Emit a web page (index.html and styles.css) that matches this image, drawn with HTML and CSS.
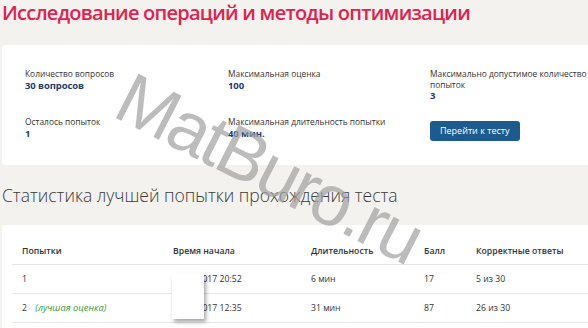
FILE: index.html
```html
<!DOCTYPE html>
<html lang="ru">
<head>
  <meta charset="UTF-8" />
  <title>Исследование операций и методы оптимизации</title>
  <link rel="stylesheet" href="styles.css">
</head>
<body>
  <div id="page">
    <h1 class="title">Исследование операций и методы оптимизации</h1>

    <div class="card info">
      <div class="item">
        <p class="label">Количество вопросов</p>
        <p class="value">30 вопросов</p>
      </div>
      <div class="item">
        <p class="label">Максимальная оценка</p>
        <p class="value">100</p>
      </div>
      <div class="item">
        <p class="label">Максимально допустимое количество попыток</p>
        <p class="value">3</p>
      </div>
      <div class="item">
        <p class="label">Осталось попыток</p>
        <p class="value">1</p>
      </div>
      <div class="item">
        <p class="label">Максимальная длительность попытки</p>
        <p class="value">40 мин.</p>
      </div>
      <div class="item">
        <button class="go">Перейти к тесту</button>
      </div>
    </div>

    <h2 class="subtitle">Статистика лучшей попытки прохождения теста</h2>

    <div class="card stats">
      <table>
        <tr>
          <th class="c1">Попытки</th>
          <th class="c2">Время начала</th>
          <th class="c3">Длительность</th>
          <th class="c4">Балл</th>
          <th>Корректные ответы</th>
        </tr>
        <tr>
          <td>1</td>
          <td>05.03.2017 20:52</td>
          <td>6 мин</td>
          <td>17</td>
          <td>5 из 30</td>
        </tr>
        <tr>
          <td>2 <span class="best">(лучшая оценка)</span></td>
          <td>12.03.2017 12:35</td>
          <td>31 мин</td>
          <td>87</td>
          <td>26 из 30</td>
        </tr>
      </table>
      <div class="cover"></div>
    </div>

    <div class="watermark">MatBuro.ru</div>
  </div>
</body>
</html>
```

FILE: styles.css
```css
html {
  overflow: hidden;
}

body {
  margin: 0;
  background-color: #f3f2ef;
  font-family: "Open Sans", "Liberation Sans", sans-serif;
  color: #333;
}

#page {
  position: relative;
  padding-left: 2px;
  width: 640px;
}

.title {
  margin: -1px 0 18px 0;
  font-size: 20px;
  line-height: 28px;
  font-weight: 600;
  color: #e2214d;
  letter-spacing: -0.75px;
}

.card {
  background-color: #fff;
  border-radius: 3px;
}

.info {
  display: grid;
  grid-template-columns: 203px 202px 158px;
  row-gap: 16px;
  padding: 24px 0 24px 23px;
}

.label {
  margin: 0;
  font-size: 8.4px;
  line-height: 10.5px;
  color: #333;
}

.value {
  margin: 0;
  font-size: 9.5px;
  line-height: 11px;
  font-weight: 700;
  color: #1b3c6c;
  letter-spacing: -0.1px;
}

.go {
  margin: -1px 0 0 0;
  padding: 0 10px;
  height: 20px;
  font-family: "Open Sans", "Liberation Sans", sans-serif;
  font-size: 9px;
  color: #fff;
  background-color: #1d5a8f;
  border: none;
  border-radius: 3px;
}

.subtitle {
  margin: 18px 0 18px 0;
  font-size: 17.5px;
  line-height: 24px;
  font-weight: 300;
  color: #3a3a3a;
}

.stats {
  position: relative;
  padding: 14px 10px 6px 10px;
}

table {
  border-collapse: collapse;
  width: 620px;
  font-size: 8.7px;
}

th, td {
  text-align: left;
  padding: 0 0 0 10px;
  border-bottom: 1px solid #e6e6e6;
}

th {
  height: 25px;
  font-weight: 600;
  color: #333;
}

td {
  height: 28px;
  color: #333;
}

.c1 { width: 141px; }
.c2 { width: 128px; }
.c3 { width: 103px; }
.c4 { width: 42px; }

.best {
  margin-left: 6px;
  font-size: 9.3px;
  font-style: italic;
  color: #3a9b3a;
}

.cover {
  position: absolute;
  left: 170px;
  top: 48px;
  width: 32px;
  height: 46px;
  background-color: #fff;
  box-shadow: 2px 3px 4px rgba(0, 0, 0, 0.35);
}

.watermark {
  position: absolute;
  left: 122px;
  top: 58px;
  font-family: "Liberation Sans", sans-serif;
  font-size: 72px;
  letter-spacing: -2.5px;
  line-height: 72px;
  color: rgba(160, 160, 160, 0.7);
  transform: rotate(27deg);
  transform-origin: 0 50%;
  pointer-events: none;
}
```
